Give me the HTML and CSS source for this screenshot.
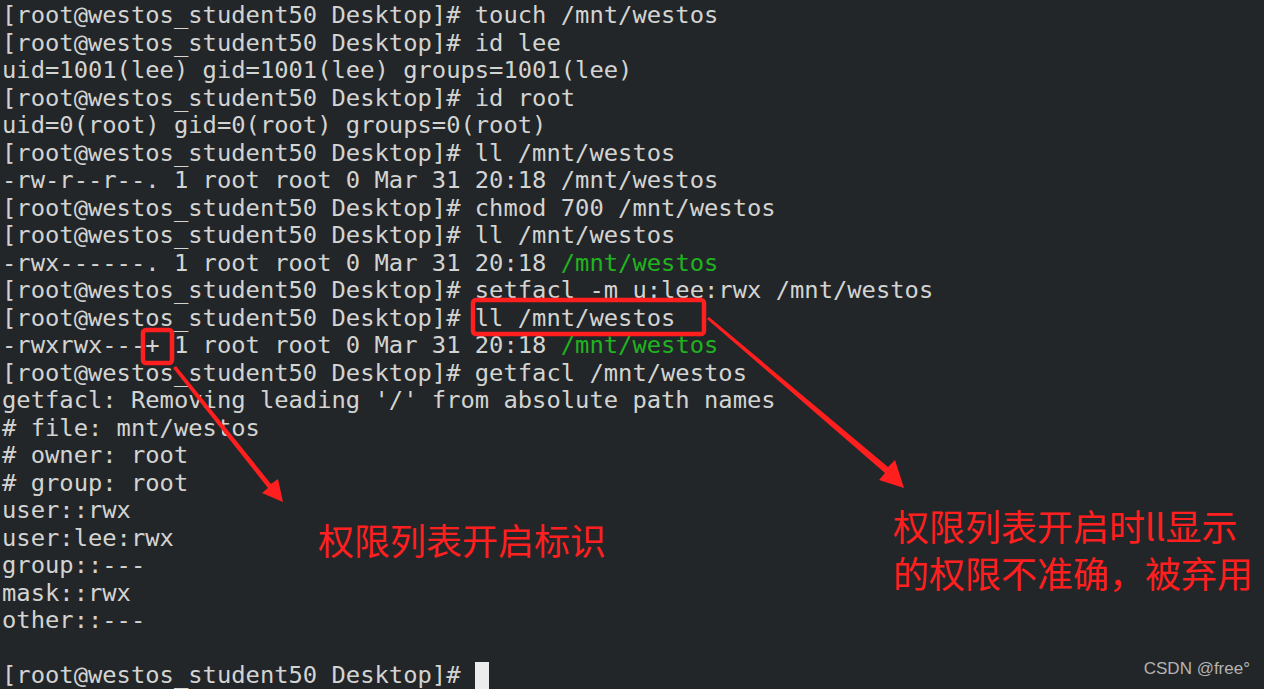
FILE: index.html
```html
<!DOCTYPE html>
<html lang="zh-CN">
<head>
  <meta charset="UTF-8" />
  <meta name="viewport" content="width=device-width, initial-scale=1.0" />
  <title>getfacl</title>
  <link rel="stylesheet" href="styles.css">
</head>
<body>
  <div class="screen">
<pre class="terminal">[root@westos_student50 Desktop]# touch /mnt/westos
[root@westos_student50 Desktop]# id lee
uid=1001(lee) gid=1001(lee) groups=1001(lee)
[root@westos_student50 Desktop]# id root
uid=0(root) gid=0(root) groups=0(root)
[root@westos_student50 Desktop]# ll /mnt/westos
-rw-r--r--. 1 root root 0 Mar 31 20:18 /mnt/westos
[root@westos_student50 Desktop]# chmod 700 /mnt/westos
[root@westos_student50 Desktop]# ll /mnt/westos
-rwx------. 1 root root 0 Mar 31 20:18 <span class="green">/mnt/westos</span>
[root@westos_student50 Desktop]# setfacl -m u:lee:rwx /mnt/westos
[root@westos_student50 Desktop]# ll /mnt/westos
-rwxrwx---+ 1 root root 0 Mar 31 20:18 <span class="green">/mnt/westos</span>
[root@westos_student50 Desktop]# getfacl /mnt/westos
getfacl: Removing leading '/' from absolute path names
# file: mnt/westos
# owner: root
# group: root
user::rwx
user:lee:rwx
group::---
mask::rwx
other::---

[root@westos_student50 Desktop]# <span class="cursor"> </span></pre>

    <!-- annotations drawn over the screenshot -->
    <svg class="marks" width="1264" height="689" viewBox="0 0 1264 689">
      <rect x="143" y="330" width="29" height="33" rx="3" fill="none" stroke="#ff1f1f" stroke-width="4.5"/>
      <rect x="473" y="300" width="231" height="34" rx="3" fill="none" stroke="#ff1f1f" stroke-width="4.5"/>
      <polygon points="173,368 176,366 271,484 278,479 283,502 262,493 268,488" fill="#ff1f1f"/>
      <polygon points="707,319 709,317 888,467 895,460 904,488 879,480 885,473" fill="#ff1f1f"/>
    </svg>

    <div class="note note-left">权限列表开启标识</div>
    <div class="note note-right">权限列表开启时ll显示<br>的权限不准确，被弃用</div>
    <div class="watermark">CSDN @free°</div>
  </div>
</body>
</html>
```

FILE: styles.css
```css
html, body {
  margin: 0;
  background: #232629;
}
.screen {
  position: relative;
  width: 1264px;
  height: 689px;
  overflow: hidden;
  background: #232629;
}
.terminal {
  margin: 0;
  padding: 2px 0 0 2px;
  font-family: "DejaVu Sans Mono", monospace;
  font-size: 23.8px;
  line-height: 27.5px;
  color: #d3d4d2;
}
.green {
  color: #1fb41f;
}
.cursor {
  display: inline-block;
  width: 14px;
  height: 27px;
  vertical-align: top;
  background: #ececec;
}
.marks {
  position: absolute;
  left: 0;
  top: 0;
}
.note {
  position: absolute;
  font-family: "Noto Sans CJK SC", sans-serif;
  font-size: 36px;
  line-height: 47px;
  color: #ff1f1f;
  white-space: nowrap;
}
.note-left {
  left: 318px;
  top: 516px;
}
.note-right {
  left: 893px;
  top: 502px;
}
.watermark {
  position: absolute;
  right: 14px;
  top: 659px;
  font-family: "Liberation Sans", Arial, sans-serif;
  font-size: 17px;
  color: #b4b4b4;
}
```
